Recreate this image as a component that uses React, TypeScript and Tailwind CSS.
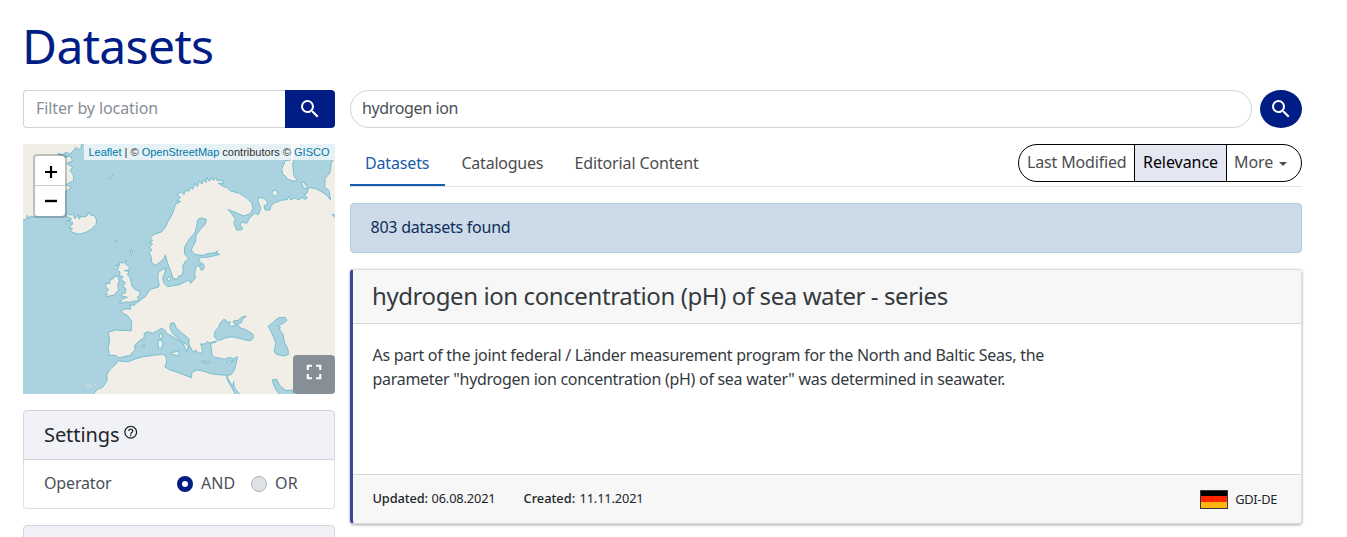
import { MdSearch, MdHelpOutline, MdFullscreen } from "react-icons/md";

const LAND = [
  // Greenland
  "M0,0 L186,0 L183,22 L176,30 L168,22 L158,34 L150,42 L138,36 L128,44 L113,40 L128,54 L150,48 L158,62 L140,70 L158,82 L150,92 L160,104 L161,122 L138,134 L155,142 L135,156 L120,170 L105,190 L90,215 L60,222 L46,232 L32,228 L28,236 L22,226 L20,238 L0,242 Z",
  // Iceland
  "M142,220 L150,226 L158,222 L165,236 L174,224 L178,238 L182,228 L190,231 L200,228 L206,217 L212,226 L222,226 L230,240 L228,254 L214,268 L200,276 L185,281 L172,282 L156,276 L150,270 L158,266 L146,262 L156,254 L158,248 L140,242 L154,240 L152,234 L138,230 Z",
  "M265,117 L270,111 L278,105 L276,112 L268,118 Z",
  "M330,332 L335,330 L338,340 L334,346 Z",
  "M284,304 L290,302 L287,307 Z",
  // Great Britain and Ireland
  "M288,374 L297,378 L300,366 L308,370 L318,362 L316,372 L330,380 L325,390 L312,392 L328,394 L322,404 L330,412 L336,438 L346,450 L358,452 L360,464 L352,472 L358,482 L340,484 L330,487 L315,486 L298,492 L308,476 L322,472 L306,468 L304,462 L316,458 L318,446 L308,440 L316,428 L304,420 L308,408 L299,410 L300,396 L292,390 L296,382 Z",
  "M270,419 L280,416 L284,408 L294,410 L298,424 L293,434 L296,450 L282,466 L268,468 L256,471 L262,463 L256,458 L266,450 L257,440 L258,430 L270,430 Z",
  // Mediterranean islands
  "M420,582 L426,578 L427,594 L422,598 L418,590 Z",
  "M414,602 L426,600 L429,612 L424,626 L415,624 Z",
  "M452,638 L464,636 L478,632 L474,648 L464,645 L452,641 Z",
  "M366,618 L373,615 L374,620 L368,622 Z",
  "M545,662 L560,664 L572,666 L568,670 L548,667 Z",
  "M620,666 L630,665 L640,660 L633,670 L624,673 Z",
  // Arctic islands
  "M812,0 L812,60 L796,62 L785,88 L788,102 L798,110 L800,116 L814,122 L834,124 L822,108 L818,74 L824,48 L840,26 L846,0 Z",
  "M844,128 L850,126 L862,140 L858,147 L850,142 Z",
  "M756,160 L758,152 L768,150 L774,160 L764,170 Z",
  "M441,416 L448,408 L452,418 L446,424 Z",
  // Continent
  "M484,156 L470,164 L482,172 L470,182 L482,184 L466,194 L462,208 L454,228 L444,244 L436,262 L424,276 L400,284 L390,296 L398,302 L388,306 L398,312 L388,320 L396,330 L388,338 L394,352 L394,366 L406,376 L418,368 L432,356 L436,344 L440,360 L446,378 L454,398 L458,414 L470,418 L478,406 L486,408 L490,392 L488,378 L496,364 L506,356 L494,342 L493,322 L506,300 L526,276 L530,258 L534,238 L545,234 L559,238 L556,252 L543,266 L528,286 L526,306 L515,326 L516,336 L528,344 L550,346 L566,340 L582,339 L594,333 L588,340 L600,343 L584,347 L560,352 L540,352 L536,360 L544,370 L540,374 L550,371 L553,384 L545,392 L536,376 L527,382 L524,400 L526,414 L512,430 L506,420 L494,426 L478,434 L460,437 L442,440 L432,430 L428,414 L434,400 L438,384 L424,390 L414,400 L414,420 L418,434 L414,442 L396,446 L384,456 L378,468 L362,480 L350,488 L342,496 L330,494 L332,508 L318,506 L304,512 L308,520 L322,526 L334,542 L334,572 L300,571 L285,570 L275,574 L265,576 L269,604 L264,624 L268,646 L288,646 L296,654 L304,652 L330,646 L338,636 L345,630 L344,616 L356,604 L372,594 L373,580 L382,575 L398,580 L412,572 L424,565 L434,570 L440,580 L454,588 L474,600 L490,612 L500,636 L505,618 L498,612 L486,606 L470,592 L456,578 L450,562 L452,550 L462,548 L468,562 L484,578 L502,592 L508,600 L506,612 L520,638 L526,630 L538,640 L548,638 L544,616 L540,612 L556,612 L562,604 L572,612 L574,626 L576,644 L584,652 L596,654 L614,658 L628,652 L640,656 L652,650 L650,664 L643,690 L634,704 L620,706 L594,704 L576,702 L552,694 L530,690 L516,697 L514,713 L490,704 L470,696 L450,690 L434,680 L440,666 L438,648 L428,643 L400,646 L370,650 L345,657 L325,665 L305,664 L294,662 L288,672 L270,688 L260,705 L262,720 L248,742 L232,748 L217,766 L950,766 L950,45 L942,58 L934,68 L930,98 L915,116 L914,142 L926,150 L932,180 L922,168 L910,158 L885,145 L865,143 L862,158 L853,164 L862,174 L852,178 L846,171 L838,180 L824,174 L812,180 L806,168 L802,179 L786,180 L760,190 L752,200 L750,210 L735,210 L732,198 L744,190 L736,176 L716,172 L714,182 L722,206 L715,224 L704,220 L690,232 L680,250 L666,246 L659,256 L668,262 L665,270 L650,270 L642,250 L646,237 L636,222 L624,208 L648,218 L672,228 L690,222 L699,206 L696,190 L680,174 L658,160 L632,153 L620,142 L610,140 L594,129 L610,132 L606,120 L592,122 L588,113 L580,122 L574,112 L568,124 L560,112 L558,128 L550,118 L546,132 L538,124 L532,140 L525,130 L518,148 L510,142 L507,154 L496,150 L492,164 Z",
];

const WATER = [
  "M611,538 L618,541 L620,548 L630,545 L628,554 L635,560 L645,555 L655,556 L660,563 L680,570 L698,582 L701,592 L692,602 L676,600 L655,594 L636,590 L615,594 L600,601 L590,598 L582,588 L586,572 L596,562 L600,550 Z",
  "M640,543 L655,541 L664,532 L679,528 L668,538 L664,548 L652,553 L642,550 Z",
  "M776,533 L796,532 L800,542 L788,551 L772,557 L782,562 L778,568 L789,582 L793,606 L804,628 L805,644 L790,648 L768,642 L762,632 L768,610 L760,590 L750,568 L744,560 L758,548 Z",
  "M756,720 L770,718 L780,738 L798,752 L820,750 L820,770 L782,770 L764,742 Z",
  "M619,706 L623,722 L634,740 L650,770 L666,770 L650,752 L642,740 L641,724 L638,740 L626,720 Z",
  "M592,603 L578,606 L568,610 L584,608 Z",
  "M936,222 L942,225 L950,222 L950,236 L940,228 Z",
];

function CoastMap() {
  return (
    <svg viewBox="9 12 936 750" preserveAspectRatio="none" className="block h-full w-full">
      <rect x="0" y="0" width="950" height="770" fill="#aad3df" />
      <g stroke="#78bece" strokeWidth="3" strokeLinejoin="round">
        {LAND.map((d) => (
          <path key={d} d={d} fill="#f1eee8" />
        ))}
        {WATER.map((d) => (
          <path key={d} d={d} fill="#aad3df" />
        ))}
      </g>
      <g fill="#d9e3df">
        <circle cx="108" cy="628" r="2" />
        <circle cx="128" cy="637" r="2" />
        <circle cx="199" cy="691" r="2" />
        <circle cx="204" cy="735" r="3" />
        <circle cx="213" cy="738" r="3" />
        <circle cx="225" cy="733" r="3" />
        <circle cx="195" cy="731" r="2" />
      </g>
    </svg>
  );
}

function LocationFilter() {
  return (
    <div className="flex h-[38px]">
      <div className="flex-1 rounded-l border border-r-0 border-[#ced4da] pl-3 leading-[34px]">
        <span className="tracking-[-0.1px] text-[#868e96]">Filter by location</span>
      </div>
      <button className="flex w-[50px] items-center justify-center rounded-r bg-[#001d85] text-white">
        <MdSearch size={24} />
      </button>
    </div>
  );
}

function MapPanel() {
  return (
    <div className="relative mt-4 h-[250px] overflow-hidden">
      <CoastMap />
      <div className="absolute top-0 right-0 h-4 bg-white/70 pr-[5.5px] pl-[4.5px] font-['Liberation_Sans'] text-[11px] leading-[16px] whitespace-nowrap text-[#333]">
        <span className="text-[#0078a8]">Leaflet</span> | © <span className="text-[#0078a8]">OpenStreetMap</span>{" "}
        contributors © <span className="text-[#0078a8]">GISCO</span>
      </div>
      <div className="absolute top-[10px] left-[10px] rounded border-2 border-black/20 bg-clip-padding">
        <div className="flex h-[30px] w-[30px] items-center justify-center rounded-t-sm border-b border-[#ccc] bg-white">
          <svg width="14" height="14" viewBox="0 0 14 14" className="translate-y-px">
            <path d="M2 7h12M8 1v12" stroke="#000" strokeWidth="2.2" />
          </svg>
        </div>
        <div className="flex h-[30px] w-[30px] items-center justify-center rounded-b-sm bg-white">
          <svg width="14" height="14" viewBox="0 0 14 14">
            <path d="M2 7h12" stroke="#000" strokeWidth="2.4" />
          </svg>
        </div>
      </div>
      <button className="absolute right-0 bottom-0 flex h-[39px] w-[42px] items-center justify-center rounded bg-[#868e96] text-white">
        <MdFullscreen size={25} className="-translate-x-[0.5px] -translate-y-[2.5px]" />
      </button>
    </div>
  );
}

function SettingsCard() {
  return (
    <div className="mt-4">
      <div className="flex h-[50px] items-center rounded-t border border-[#d3d5da] bg-[#f1f2f8] pl-5">
        <span className="text-[20px] leading-6 tracking-[-0.08px] text-[#212529]">Settings</span>
        <MdHelpOutline size={15.5} className="ml-[4px] -translate-y-[2.5px] text-[#212529]" />
      </div>
      <div className="flex h-[49px] items-center rounded-b border border-t-0 border-[#dfdfdf] pl-5 text-[#495057]">
        <span className="w-[133px] pb-[2px] tracking-[-0.15px]">Operator</span>
        <span className="flex size-4 items-center justify-center rounded-full bg-[#001d85]">
          <span className="size-[6px] rounded-full bg-white" />
        </span>
        <span className="ml-2 w-[50px] pb-[2px]">AND</span>
        <span className="size-4 rounded-full border border-[#adb5bd] bg-[#dee2e6]" />
        <span className="ml-2 pb-[2px] tracking-[0.2px]">OR</span>
      </div>
    </div>
  );
}

function SearchBar() {
  return (
    <div className="flex h-[38px] gap-2">
      <div className="flex-1 rounded-full border border-[#ced4da] pl-[11px] leading-[34px]">
        <span className="tracking-[-0.37px] text-[#495057]">hydrogen ion</span>
      </div>
      <button className="flex w-[42px] items-center justify-center rounded-[50%] bg-[#001d85] text-white">
        <MdSearch size={24} />
      </button>
    </div>
  );
}

function TabBar() {
  return (
    <div className="mt-4 flex h-[43px] items-start justify-between border-b border-[#dee2e6] text-[#4d4d4d]">
      <div className="flex h-[42px]">
        <div className="w-[95px] border-b-2 border-[#175baf] pl-[15px] leading-[38px] tracking-[-0.15px] text-[#175baf]">
          Datasets
        </div>
        <div className="w-[113px] pl-[16.5px] leading-[38px] tracking-[-0.24px]">Catalogues</div>
        <div className="pl-[16.5px] leading-[38px] tracking-[-0.14px]">Editorial Content</div>
      </div>
      <div className="flex h-[38px] w-[284px] overflow-hidden rounded-full border border-black leading-[35px]">
        <div className="w-[116px] border-r border-black pl-[8px] tracking-[-0.16px]">Last Modified</div>
        <div className="w-[92px] border-r border-black bg-[#e5e7f3] pl-[8px] tracking-[-0.06px] text-black">
          Relevance
        </div>
        <div className="flex items-start pl-[7px]">
          <span className="tracking-[-0.1px]">More</span>
          <span className="mt-[17px] ml-[6px] border-x-4 border-t-4 border-x-transparent border-t-[#4d4d4d]" />
        </div>
      </div>
    </div>
  );
}

function GermanFlag() {
  return (
    <div className="flex h-[19px] w-7 flex-col border border-[#343a40]">
      <div className="flex-1 bg-black" />
      <div className="flex-1 bg-[#ff2600]" />
      <div className="flex-1 bg-[#ffb50d]" />
    </div>
  );
}

function DatasetCard() {
  return (
    <article className="mt-4 flex h-[255px] flex-col rounded border border-l-[3px] border-[#dcdcdc] border-l-[#334a9d] shadow-[0_1px_3px_rgba(0,0,0,0.35)]">
      <header className="h-[54px] border-b border-[#d8d8d8] bg-[#f7f7f7] pl-[19px] text-[24px] leading-[51px] tracking-[-0.41px] text-[#343a40]">
        hydrogen ion concentration (pH) of sea water - series
      </header>
      <div className="flex-1 pt-[19px] pl-[19.5px] leading-6 whitespace-nowrap text-[#343a40]">
        <p className="tracking-[-0.263px]">
          As part of the joint federal / Länder measurement program for the North and Baltic Seas, the
        </p>
        <p className="tracking-[-0.285px]">
          parameter "hydrogen ion concentration (pH) of sea water" was determined in seawater.
        </p>
      </div>
      <footer className="flex h-[49px] items-center rounded-b border-t border-[#d8d8d8] bg-[#f7f7f7] pr-6 pl-[19.5px] text-[12.8px] text-[#212529]">
        <span className="w-[59px] pb-[2px] font-medium tracking-[-0.1px]">Updated:</span>
        <span className="w-[92px] pb-[2px] tracking-[-0.14px]">06.08.2021</span>
        <span className="w-14 pb-[2px] font-medium">Created:</span>
        <span className="flex-1 pb-[2px] tracking-[-0.14px]">11.11.2021</span>
        <GermanFlag />
        <span className="ml-[7px] tracking-[-0.3px]">GDI-DE</span>
      </footer>
    </article>
  );
}

export default function App() {
  return (
    <main className="h-[537px] overflow-hidden bg-white pl-[23px] font-['Noto_Sans',sans-serif] text-[16px] leading-6">
      <h1 className="-ml-px h-[90px] pt-[17px] text-[48px] leading-[58px] tracking-[-0.65px] text-[#001d85]">
        Datasets
      </h1>
      <div className="flex gap-[15px]">
        <aside className="w-[312px]">
          <LocationFilter />
          <MapPanel />
          <SettingsCard />
          <div className="mt-4 h-[50px] rounded-t border border-[#d3d5da] bg-[#f1f2f8]" />
        </aside>
        <section className="w-[952px]">
          <SearchBar />
          <TabBar />
          <div className="mt-4 h-[50px] rounded border border-[#b8cce0] bg-[#cddae7] pl-[19.5px] leading-[47px] tracking-[-0.24px] text-[#0c2f5b]">
            803 datasets found
          </div>
          <DatasetCard />
        </section>
      </div>
    </main>
  );
}
